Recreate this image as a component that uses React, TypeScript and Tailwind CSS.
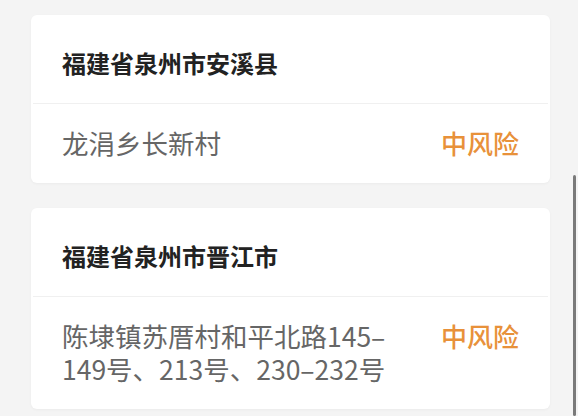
const areas = [
  { region: "福建省泉州市安溪县", place: "龙涓乡长新村", risk: "中风险" },
  { region: "福建省泉州市晋江市", place: "陈埭镇苏厝村和平北路145–149号、213号、230–232号", risk: "中风险" },
];

const AreaCard = ({ region, place, risk }: { region: string; place: string; risk: string }) => (
  <div className="bg-white rounded-md shadow-[0_1px_3px_rgba(0,0,0,0.04)]">
    {/* Province / city header */}
    <div className="px-[31px] pt-[36px] pb-[28px] text-[24px] leading-[24px] font-bold text-[#222]">
      {region}
    </div>
    <div className="mx-[2px] h-px bg-[#f0f0f0]" />
    {/* Place row */}
    <div className="flex items-start justify-between px-[31px] pt-[22px] pb-[24px]">
      <div className="w-[340px] text-[26.5px] leading-[33px] text-[#666]">{place}</div>
      <div className="text-[26px] leading-[33px] font-medium text-[#e8913a]">{risk}</div>
    </div>
  </div>
);

export default function App() {
  return (
    <div
      className="relative w-[578px] h-[416px] overflow-hidden bg-[#f4f4f4]"
      style={{ fontFamily: '"Noto Sans CJK SC", "Noto Sans", sans-serif' }}
    >
      <div className="flex flex-col gap-[25px] pl-[31px] pr-[28px] pt-[15px]">
        {areas.map((a) => (
          <AreaCard key={a.region} {...a} />
        ))}
      </div>
      {/* scroll indicator */}
      <div className="absolute left-[573px] top-[175px] w-[3px] h-[241px] rounded-full bg-[#7a7a7a]" />
    </div>
  );
}
